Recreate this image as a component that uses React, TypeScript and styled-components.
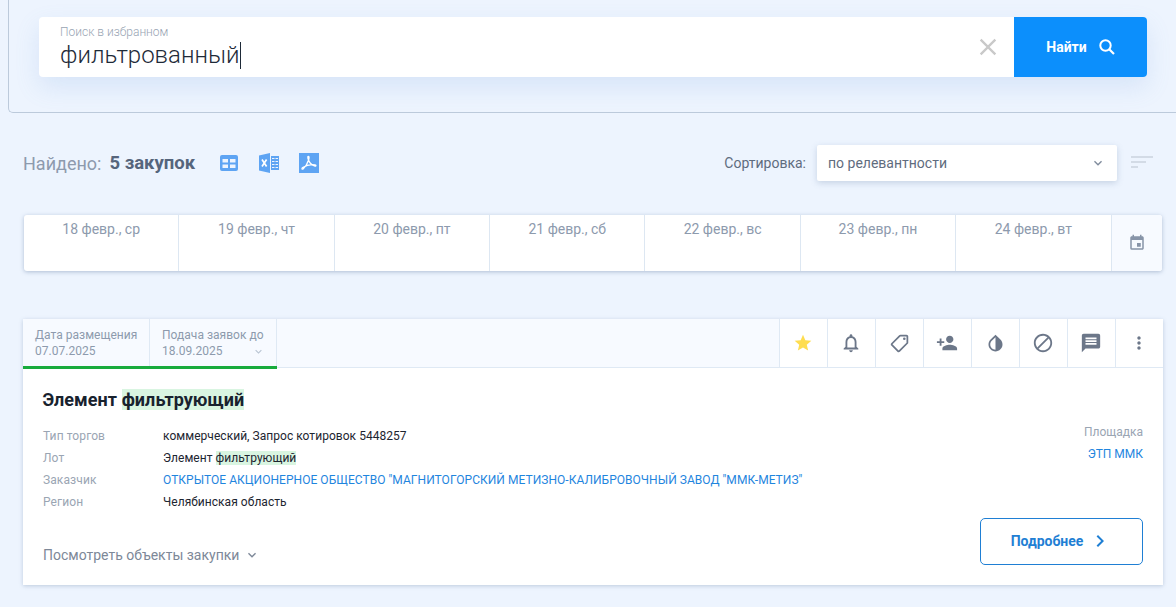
import { createGlobalStyle, styled } from "styled-components";
import {
  MdBlock,
  MdChevronRight,
  MdClose,
  MdEvent,
  MdExpandMore,
  MdInvertColors,
  MdMessage,
  MdMoreVert,
  MdNotificationsNone,
  MdOutlineLocalOffer,
  MdPersonAdd,
  MdStar,
} from "react-icons/md";

const GlobalStyle = createGlobalStyle`
    html, body {
        margin: 0;
        height: 100%;
        overflow: hidden;
        background-color: #edf4fe;
        font-family: Roboto, "Liberation Sans", sans-serif;
    }
`;

const Page = styled.div`
    width: 1176px;
    height: 607px;
    overflow: hidden;
`;

const SearchPanel = styled.div`
    box-sizing: border-box;
    height: 113px;
    margin-left: 8px;
    padding: 17px 29px 0 30px;
    border-left: 1px solid #bccadb;
    border-bottom: 1px solid #bccadb;
    border-bottom-left-radius: 5px;
`;

const SearchBox = styled.div`
    display: flex;
    height: 60px;
    background-color: #fff;
    border-radius: 4px;
    box-shadow: 0 10px 24px rgba(100, 150, 220, 0.16);
`;

const SearchField = styled.div`
    flex: 1;
    padding: 8px 0 0 21px;
`;

const SearchLabel = styled.div`
    font-size: 12px;
    font-weight: 300;
    line-height: 14px;
    color: #98a4b3;
`;

const SearchValue = styled.div`
    display: flex;
    align-items: center;
    height: 28px;
    margin-top: 2px;
    font-size: 24px;
    font-weight: 300;
    color: #1e2a38;
`;

const Caret = styled.span`
    width: 1px;
    height: 27px;
    margin-left: 1px;
    background-color: #1e2a38;
`;

const ClearButton = styled.div`
    display: flex;
    align-items: center;
    justify-content: center;
    width: 28px;
    margin-right: 12px;
    color: #c9c9c9;
`;

const FindButton = styled.button`
    display: flex;
    align-items: center;
    justify-content: center;
    gap: 12px;
    width: 133px;
    border: none;
    padding: 0 0 1px;
    background-color: #0c8ffc;
    border-radius: 0 4px 4px 0;
    color: #fff;
    font-family: inherit;
    font-size: 14px;
    font-weight: 700;
`;

const ResultBar = styled.div`
    display: flex;
    align-items: center;
    height: 36px;
    margin: 32px 23px 0 23px;
`;

const FoundLabel = styled.span`
    font-size: 18px;
    color: #8d9aad;
`;

const FoundCount = styled.span`
    margin-left: 8px;
    font-size: 18.5px;
    font-weight: 700;
    color: #56657c;
`;

const ExportIcons = styled.div`
    display: flex;
    align-items: center;
    gap: 20px;
    margin-left: 24px;
`;

const SortLabel = styled.span`
    margin-left: auto;
    font-size: 14px;
    color: #5f6c7e;
`;

const SortSelect = styled.div`
    display: flex;
    align-items: center;
    justify-content: space-between;
    box-sizing: border-box;
    width: 300px;
    height: 36px;
    margin-left: 11px;
    padding: 0 11px;
    background-color: #fff;
    border-radius: 2px;
    box-shadow: 0 2px 6px rgba(80, 110, 150, 0.25);
    font-size: 14px;
    color: #5f6c7e;
`;

const SortIcon = styled.svg`
    margin-left: 14px;
`;

const DateStrip = styled.div`
    display: flex;
    height: 56px;
    margin: 34px 14px 0 24px;
    background-color: #fff;
    border-radius: 3px;
    box-shadow: 0 1px 4px rgba(80, 110, 150, 0.4);
`;

const DateCell = styled.div`
    flex: 1;
    padding-top: 6px;
    border-right: 1px solid #dde7f2;
    font-size: 14px;
    line-height: 16px;
    text-align: center;
    color: #8d9aad;
`;

const CalendarCell = styled.div`
    display: flex;
    align-items: center;
    justify-content: center;
    width: 50.5px;
    background-color: #f7faff;
    border-radius: 0 3px 3px 0;
    color: #8794a8;
`;

const Card = styled.div`
    height: 266px;
    margin: 48px 13px 0 23px;
    background-color: #fff;
    box-shadow: 0 1px 4px rgba(80, 110, 150, 0.3);
`;

const CardHead = styled.div`
    display: flex;
    box-sizing: border-box;
    height: 49px;
    background-color: #f7faff;
    border-bottom: 1px solid #dfe9f4;
`;

const DateTabs = styled.div`
    display: flex;
    height: 50px;
    box-sizing: border-box;
    border-bottom: 3px solid #18ab3c;
`;

const DateTab = styled.div<{ $width: number }>`
    box-sizing: border-box;
    width: ${(p) => p.$width}px;
    padding: 8px 0 0 12px;
    border-right: 1px solid #dfe9f4;
    font-size: 12px;
    line-height: 16px;
    letter-spacing: 0.02px;
    color: #8d9aad;
`;

const TabValue = styled.div`
    display: flex;
    align-items: center;
    justify-content: space-between;
    padding-right: 11px;
    color: #8d9aad;
`;

const Actions = styled.div`
    display: flex;
    margin-left: auto;
`;

const ActionCell = styled.div<{ $tint?: string }>`
    display: flex;
    align-items: center;
    justify-content: center;
    box-sizing: border-box;
    width: 48px;
    padding-right: 1px;
    border-left: 1px solid #dfe9f4;
    background-color: #fff;
    color: ${(p) => p.$tint || "#6c7789"};
`;

const CardBody = styled.div`
    display: grid;
    grid-template-columns: 1fr auto;
    padding: 20px 20px 0 20px;
`;

const Title = styled.h2`
    grid-column: 1 / 3;
    margin: 0 0 0 -0.5px;
    height: 24px;
    font-size: 18px;
    line-height: 24px;
    font-weight: 700;
    letter-spacing: 0.06px;
    color: #18222e;
`;

const Mark = styled.span`
    background-color: #d9f5e1;
`;

const Fields = styled.div`
    display: grid;
    grid-template-columns: 120px 1fr;
    grid-auto-rows: 22px;
    align-items: center;
    margin-top: 13px;
    font-size: 12px;
`;

const FieldName = styled.div`
    letter-spacing: 0.1px;
    color: #9aa5b3;
`;

const FieldValue = styled.div`
    letter-spacing: 0.04px;
    color: #1d2530;
`;

const FieldLink = styled(FieldValue)`
    color: #1f85de;
`;

const Platform = styled.div`
    display: grid;
    grid-auto-rows: 22px;
    align-items: center;
    justify-items: end;
    margin-top: 9px;
    font-size: 12px;
    color: #9aa5b3;
`;

const PlatformLink = styled.div`
    color: #1f85de;
`;

const ShowItems = styled.div`
    display: flex;
    align-items: center;
    gap: 5px;
    align-self: end;
    height: 20px;
    font-size: 14px;
    color: #7d8898;
`;

const MoreButton = styled.button`
    display: flex;
    align-items: center;
    justify-content: center;
    gap: 5px;
    box-sizing: border-box;
    width: 163px;
    height: 47px;
    margin-top: 5px;
    padding: 0 0 1px;
    background-color: #fff;
    border: 1px solid #1f7fd4;
    border-radius: 5px;
    color: #1f7fd4;
    font-family: inherit;
    font-size: 14px;
    font-weight: 700;
`;

const dates = [
  "18 февр., ср",
  "19 февр., чт",
  "20 февр., пт",
  "21 февр., сб",
  "22 февр., вс",
  "23 февр., пн",
  "24 февр., вт",
];

const App = () => {
  return (
    <Page>
      <GlobalStyle />
      <SearchPanel>
        <SearchBox>
          <SearchField>
            <SearchLabel>Поиск в избранном</SearchLabel>
            <SearchValue>
              фильтрованный
              <Caret />
            </SearchValue>
          </SearchField>
          <ClearButton>
            <MdClose size={28} />
          </ClearButton>
          <FindButton>
            Найти
            <svg width="16" height="16" viewBox="0 0 16 16">
              <circle cx="6.500" cy="6.500" r="5.200" fill="none" stroke="currentColor" strokeWidth="2" />
              <path d="M10.500 10.500 15 15" stroke="currentColor" strokeWidth="2.200" />
            </svg>
          </FindButton>
        </SearchBox>
      </SearchPanel>

      <ResultBar>
        <FoundLabel>Найдено:</FoundLabel>
        <FoundCount>5 закупок</FoundCount>
        <ExportIcons>
          <svg width="20" height="18" viewBox="0 0 20 18">
            <path
              fill="#5ea4f3"
              fillRule="evenodd"
              d="M3 1h14a2 2 0 0 1 2 2v12a2 2 0 0 1-2 2H3a2 2 0 0 1-2-2V3a2 2 0 0 1 2-2zM3.500 5v3.500h5.500V5zM11 5v3.500h5.500V5zM3.500 10.500V14h5.500v-3.500zM11 10.500V14h5.500v-3.500z"
            />
          </svg>
          <svg width="20" height="20" viewBox="0 0 20 20">
            <path fill="#5ea4f3" d="M0 2.500 11 0v20L0 17.500z" />
            <path fill="#5ea4f3" d="M12 3h8v14h-8z" />
            <path stroke="#fff" strokeWidth="1.700" d="M3 6.500l4.600 7M7.600 6.500l-4.600 7" />
            <path stroke="#edf4fe" strokeWidth="1" d="M13 5.500h2.500M16.500 5.500H19M13 8.500h2.500M16.500 8.500H19M13 11.500h2.500M16.500 11.500H19M13 14.500h2.500M16.500 14.500H19" />
          </svg>
          <svg width="20" height="20" viewBox="0 0 20 20">
            <path fill="#5ea4f3" d="M0 0h20v20H0z" />
            <path
              fill="none"
              stroke="#fff"
              strokeWidth="1.300"
              d="M9 3.500c1.200-.6 1.300 1.200.6 3.500-1 3-3.200 6.800-5.300 8.800-1.200 1-2-.3-.6-1.300 3-1.900 8.500-3.200 12.300-2.700 1.500.3 1 1.700-.5 1.200-2.800-1-5.700-4.500-6.500-7.500-.3-1 0-1.800 0-2z"
            />
          </svg>
        </ExportIcons>
        <SortLabel>Сортировка:</SortLabel>
        <SortSelect>
          по релевантности
          <MdExpandMore size={16} color="#7f8b9c" />
        </SortSelect>
        <SortIcon width="22" height="16" viewBox="0 0 22 16">
          <path fill="#d3dbe6" d="M0 1h22v2H0zM0 6h15v2H0zM0 11h7v2H0z" />
        </SortIcon>
      </ResultBar>

      <DateStrip>
        {dates.map((d) => (
          <DateCell key={d}>{d}</DateCell>
        ))}
        <CalendarCell>
          <MdEvent size={18} />
        </CalendarCell>
      </DateStrip>

      <Card>
        <CardHead>
          <DateTabs>
            <DateTab $width={127}>
              Дата размещения
              <TabValue>07.07.2025</TabValue>
            </DateTab>
            <DateTab $width={127}>
              Подача заявок до
              <TabValue>
                18.09.2025
                <MdExpandMore size={13} color="#b9c4d2" />
              </TabValue>
            </DateTab>
          </DateTabs>
          <Actions>
            <ActionCell $tint="#fedd50">
              <MdStar size={20} />
            </ActionCell>
            <ActionCell>
              <MdNotificationsNone size={22} />
            </ActionCell>
            <ActionCell>
              <MdOutlineLocalOffer size={21} style={{ transform: "scaleX(-1)" }} />
            </ActionCell>
            <ActionCell>
              <MdPersonAdd size={22} />
            </ActionCell>
            <ActionCell>
              <MdInvertColors size={21} />
            </ActionCell>
            <ActionCell>
              <MdBlock size={22} />
            </ActionCell>
            <ActionCell>
              <MdMessage size={22} />
            </ActionCell>
            <ActionCell>
              <MdMoreVert size={20} />
            </ActionCell>
          </Actions>
        </CardHead>
        <CardBody>
          <Title>
            Элемент <Mark>фильтрующий</Mark>
          </Title>
          <Fields>
            <FieldName>Тип торгов</FieldName>
            <FieldValue>коммерческий, Запрос котировок 5448257</FieldValue>
            <FieldName>Лот</FieldName>
            <FieldValue>
              Элемент <Mark>фильтрующий</Mark>
            </FieldValue>
            <FieldName>Заказчик</FieldName>
            <FieldLink>
              ОТКРЫТОЕ АКЦИОНЕРНОЕ ОБЩЕСТВО "МАГНИТОГОРСКИЙ МЕТИЗНО-КАЛИБРОВОЧНЫЙ ЗАВОД "ММК-МЕТИЗ"
            </FieldLink>
            <FieldName>Регион</FieldName>
            <FieldValue>Челябинская область</FieldValue>
          </Fields>
          <Platform>
            Площадка
            <PlatformLink>ЭТП ММК</PlatformLink>
          </Platform>
          <ShowItems>
            Посмотреть объекты закупки
            <MdExpandMore size={16} />
          </ShowItems>
          <MoreButton>
            Подробнее
            <MdChevronRight size={24} />
          </MoreButton>
        </CardBody>
      </Card>
    </Page>
  );
};

export default App;
